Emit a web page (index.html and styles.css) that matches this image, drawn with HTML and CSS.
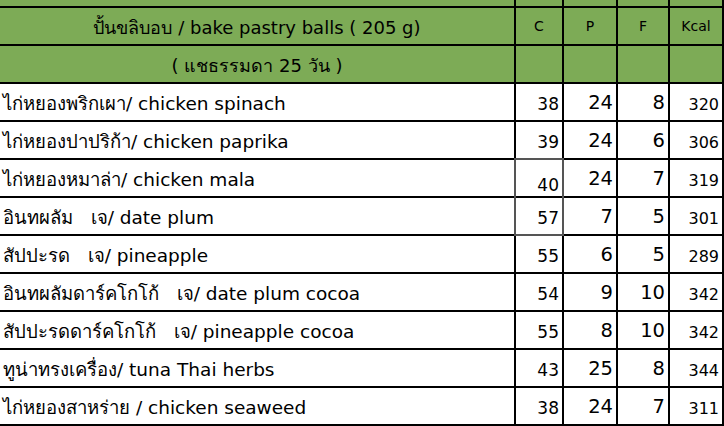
FILE: index.html
```html
<!DOCTYPE html>
<html lang="th">
<head>
<meta charset="utf-8">
<title>bake pastry balls</title>
<link rel="stylesheet" href="styles.css">
</head>
<body>
<div class="sheet">
  <div class="cell head top"></div>
  <div class="cell head top"></div>
  <div class="cell head top"></div>
  <div class="cell head top"></div>
  <div class="cell head top"></div>

  <div class="cell head title">ปั้นขลิบอบ / bake pastry balls ( 205 g)</div>
  <div class="cell head col">C</div>
  <div class="cell head col">P</div>
  <div class="cell head col">F</div>
  <div class="cell head col">Kcal</div>

  <div class="cell head title">( แชธรรมดา 25 วัน )</div>
  <div class="cell head"></div>
  <div class="cell head"></div>
  <div class="cell head"></div>
  <div class="cell head"></div>

  <div class="cell name">ไก่หยองพริกเผา/ chicken spinach</div>
  <div class="cell num c">38</div><div class="cell num pf">24</div><div class="cell num pf">8</div><div class="cell num k">320</div>

  <div class="cell name">ไก่หยองปาปริก้า/ chicken paprika</div>
  <div class="cell num c">39</div><div class="cell num pf">24</div><div class="cell num pf">6</div><div class="cell num k">306</div>

  <div class="cell name">ไก่หยองหมาล่า/ chicken mala</div>
  <div class="cell num c low">40</div><div class="cell num pf">24</div><div class="cell num pf">7</div><div class="cell num k">319</div>

  <div class="cell name">อินทผลัม&nbsp;&nbsp; เจ/ date plum</div>
  <div class="cell num c">57</div><div class="cell num pf">7</div><div class="cell num pf">5</div><div class="cell num k">301</div>

  <div class="cell name">สัปปะรด&nbsp;&nbsp; เจ/ pineapple</div>
  <div class="cell num c">55</div><div class="cell num pf">6</div><div class="cell num pf">5</div><div class="cell num k">289</div>

  <div class="cell name">อินทผลัมดาร์คโกโก้&nbsp;&nbsp; เจ/ date plum cocoa</div>
  <div class="cell num c">54</div><div class="cell num pf">9</div><div class="cell num pf">10</div><div class="cell num k">342</div>

  <div class="cell name">สัปปะรดดาร์คโกโก้&nbsp;&nbsp; เจ/ pineapple cocoa</div>
  <div class="cell num c">55</div><div class="cell num pf">8</div><div class="cell num pf">10</div><div class="cell num k">342</div>

  <div class="cell name">ทูน่าทรงเครื่อง/ tuna Thai herbs</div>
  <div class="cell num c">43</div><div class="cell num pf">25</div><div class="cell num pf">8</div><div class="cell num k">344</div>

  <div class="cell name">ไก่หยองสาหร่าย / chicken seaweed</div>
  <div class="cell num c">38</div><div class="cell num pf">24</div><div class="cell num pf">7</div><div class="cell num k">311</div>

  <div class="mark"></div>
</div>
</body>
</html>
```

FILE: styles.css
```css
html, body {
  margin: 0;
  padding: 0;
  background: #ffffff;
}

.sheet {
  position: relative;
  width: 724px;
  height: 426px;
  box-sizing: border-box;
  padding: 0 2px 2px 0;
  display: grid;
  grid-template-columns: 514px 46px 52px 50px 52px;
  grid-template-rows: 6px 36px 36px repeat(9, 36px);
  gap: 2px;
  background: #000000;
  font-family: "DejaVu Sans", "Noto Sans", sans-serif;
  color: #000000;
  overflow: hidden;
}

.cell {
  background: #ffffff;
  display: flex;
  align-items: center;
  white-space: nowrap;
  overflow: hidden;
}

.head {
  background: #7dab56;
}

.title {
  justify-content: center;
  font-size: 18px;
  padding-top: 2px;
}

.col {
  justify-content: center;
  font-size: 14px;
}

.name {
  font-size: 18.5px;
  padding-left: 3px;
  padding-top: 2px;
}

.num {
  justify-content: flex-end;
  padding-right: 3px;
}

.c {
  font-size: 17px;
  padding-top: 4px;
}

.c.low {
  align-items: flex-end;
  padding-bottom: 1px;
}

.pf {
  font-size: 19.5px;
}

.k {
  font-size: 16px;
  padding-top: 4px;
}

.mark {
  position: absolute;
  left: 514px;
  top: 158px;
  width: 50px;
  height: 78px;
  box-sizing: border-box;
  border: 2px solid #555555;
}
```
